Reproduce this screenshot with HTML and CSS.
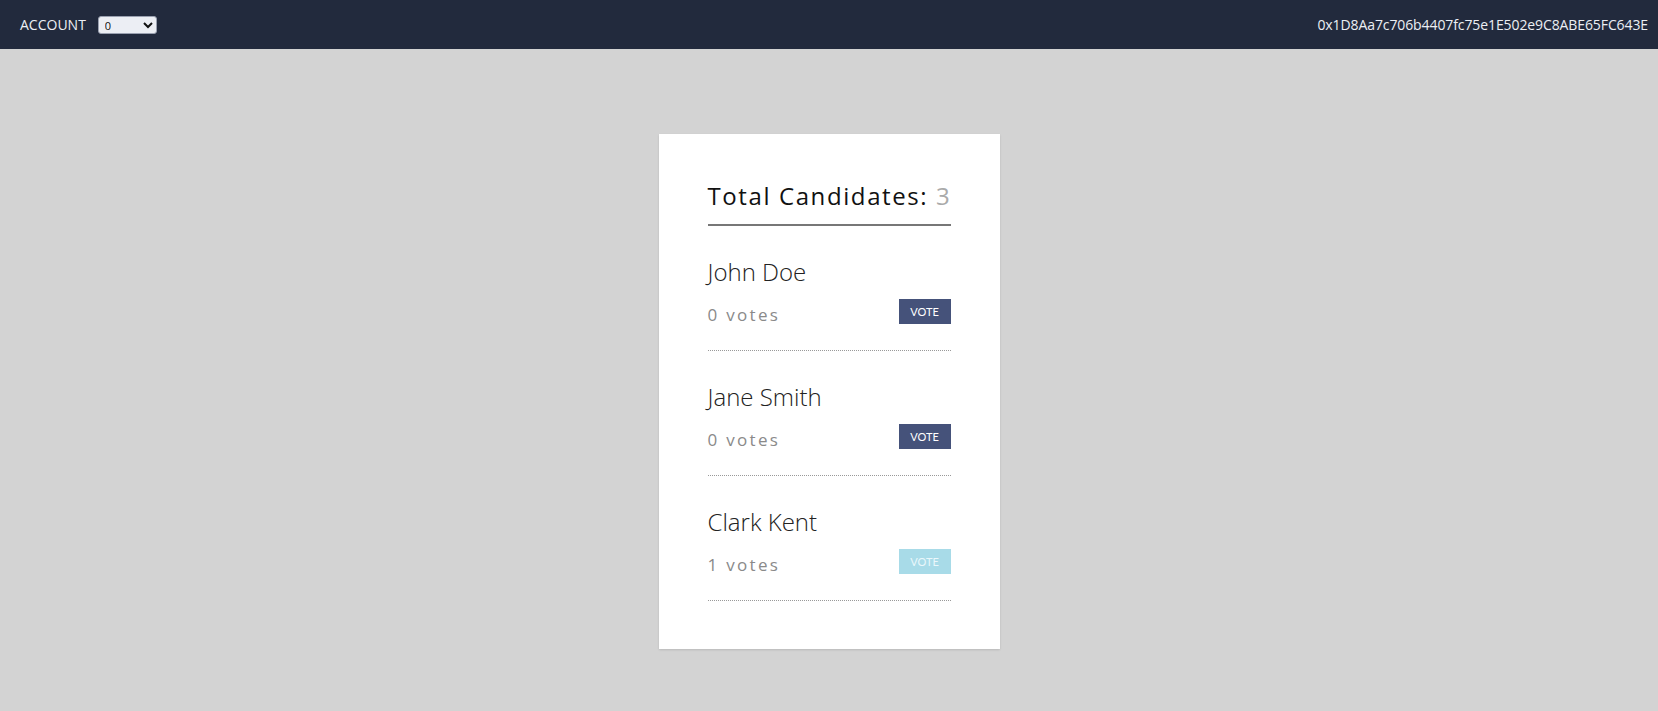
FILE: index.html
```html
<!DOCTYPE html>
<html>
<head>
<meta charset="utf-8">
<link rel="stylesheet" href="styles.css">
</head>
<body>
<header class="topbar">
  <div class="account">
    <span class="account-label">ACCOUNT</span>
    <select class="account-select"><option>0</option><option>1</option><option>2</option></select>
  </div>
  <div class="address">0x1D8Aa7c706b4407fc75e1E502e9C8ABE65FC643E</div>
</header>
<main class="page">
  <section class="card">
    <h2 class="title">Total Candidates: <span class="count">3</span></h2>
    <div class="candidate">
      <div class="name">John Doe</div>
      <div class="row">
        <span class="votes">0 votes</span>
        <button class="vote">VOTE</button>
      </div>
    </div>
    <div class="candidate">
      <div class="name">Jane Smith</div>
      <div class="row">
        <span class="votes">0 votes</span>
        <button class="vote">VOTE</button>
      </div>
    </div>
    <div class="candidate">
      <div class="name">Clark Kent</div>
      <div class="row">
        <span class="votes">1 votes</span>
        <button class="vote vote-disabled" disabled>VOTE</button>
      </div>
    </div>
  </section>
</main>
</body>
</html>
```
FILE: styles.css
```css
* { box-sizing: border-box; }
html, body { margin: 0; padding: 0; }
body {
  background: #d3d3d3;
  font-family: "Open Sans", "Noto Sans", sans-serif;
  height: 711px;
  overflow: hidden;
}
.topbar {
  height: 49px;
  background: #222a3d;
  display: flex;
  align-items: center;
  justify-content: space-between;
  padding: 0 10px 0 20px;
  color: #eceff4;
  font-size: 14px;
}
.account { display: flex; align-items: center; gap: 12px; }
.account-select {
  width: 59px;
  height: 18px;
  font-size: 11px;
  font-family: "Open Sans", sans-serif;
  background: #eceef4;
  border: 1px solid #9aa0b0;
  border-radius: 3px;
  padding: 0 2px;
  color: #111;
}
.address { font-size: 14px; letter-spacing: -0.1px; }
.page {
  display: flex;
  justify-content: center;
  padding-top: 85px;
}
.card {
  width: 341px;
  background: #fff;
  padding: 47px 49px 48px;
  box-shadow: 0 1px 2px rgba(0,0,0,0.12);
}
.title {
  margin: 0;
  font-size: 24px;
  line-height: 30px;
  font-weight: 400;
  letter-spacing: 1.6px;
  color: #111;
  padding-bottom: 13px;
  border-bottom: 2px solid #777;
  white-space: nowrap;
}
.count { color: #aaa; }
.candidate {
  padding: 31px 0 22px;
  border-bottom: 1px dotted #999;
}
.name {
  font-size: 24px;
  line-height: 30px;
  font-weight: 300;
  color: #222;
}
.row {
  display: flex;
  justify-content: space-between;
  align-items: flex-start;
  margin-top: 12px;
}
.votes {
  font-size: 17px;
  line-height: 26px;
  margin-top: 3px;
  letter-spacing: 2.3px;
  color: #8a8a8a;
}
.vote {
  width: 52px;
  height: 25px;
  border: 0;
  padding: 0;
  background: #45527a;
  color: #fff;
  font-family: Lato, "Open Sans", sans-serif;
  font-size: 11px;
  letter-spacing: 0;
}
.vote-disabled { background: #a8dbe8; color: #eaf7fb; }
```
